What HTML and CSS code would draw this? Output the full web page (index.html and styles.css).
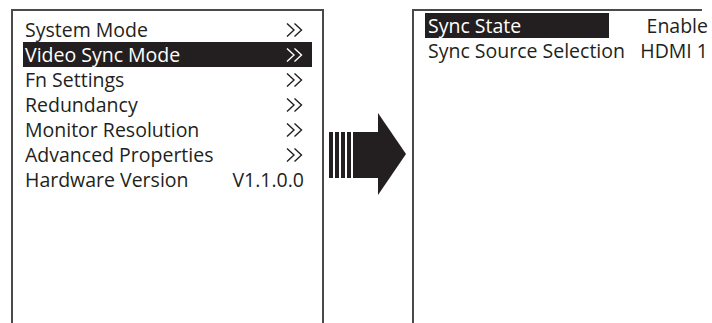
FILE: index.html
```html
<!DOCTYPE html>
<html lang="en">

<head>
  <meta charset="UTF-8">
  <title>Video Sync Mode</title>
  <link rel="stylesheet" href="styles.css">
</head>

<body>

  <div class="screen menu">
    <div class="row"><span>System Mode</span><svg class="chev" viewBox="0 0 17 14"><path d="M1 0.5 L8 7 L1 13.5 M8.5 0.5 L15.5 7 L8.5 13.5"/></svg></div>
    <div class="row active"><span>Video Sync Mode</span><svg class="chev" viewBox="0 0 17 14"><path d="M1 0.5 L8 7 L1 13.5 M8.5 0.5 L15.5 7 L8.5 13.5"/></svg></div>
    <div class="row"><span>Fn Settings</span><svg class="chev" viewBox="0 0 17 14"><path d="M1 0.5 L8 7 L1 13.5 M8.5 0.5 L15.5 7 L8.5 13.5"/></svg></div>
    <div class="row"><span>Redundancy</span><svg class="chev" viewBox="0 0 17 14"><path d="M1 0.5 L8 7 L1 13.5 M8.5 0.5 L15.5 7 L8.5 13.5"/></svg></div>
    <div class="row"><span>Monitor Resolution</span><svg class="chev" viewBox="0 0 17 14"><path d="M1 0.5 L8 7 L1 13.5 M8.5 0.5 L15.5 7 L8.5 13.5"/></svg></div>
    <div class="row"><span>Advanced Properties</span><svg class="chev" viewBox="0 0 17 14"><path d="M1 0.5 L8 7 L1 13.5 M8.5 0.5 L15.5 7 L8.5 13.5"/></svg></div>
    <div class="row"><span>Hardware Version</span><span>V1.1.0.0</span></div>
  </div>

  <div class="arrow">
    <svg viewBox="0 0 78 83" width="78" height="83">
      <rect x="0" y="19" width="4" height="46"/>
      <rect x="6" y="19" width="4" height="46"/>
      <rect x="12" y="19" width="4" height="46"/>
      <rect x="18" y="19" width="4" height="46"/>
      <rect x="24" y="19" width="26" height="46"/>
      <polygon points="49,0 77,41 49,82"/>
    </svg>
  </div>

  <div class="screen sub">
    <div class="sub-grid">
      <span class="label active">Sync State</span><span class="value">Enable</span>
      <span class="label">Sync Source Selection</span><span class="value">HDMI 1</span>
    </div>
  </div>

</body>

</html>
```

FILE: styles.css
```css
* {
  box-sizing: border-box;
}

body {
  margin: 0;
  padding: 9px 0 0 11px;
  background: #fff;
  color: #231f20;
  font-family: "Open Sans", "Noto Sans", sans-serif;
  font-size: 19.5px;
  display: flex;
  align-items: flex-start;
  overflow: hidden;
  height: 323px;
}

.screen {
  border: 2px solid #4a4a4a;
  border-bottom: none;
  height: 314px;
  flex-shrink: 0;
}

.menu {
  width: 313px;
  padding-top: 6px;
}

.row {
  margin: 0 10px;
  padding: 0 8px 0 2px;
  height: 25px;
  line-height: 25px;
  display: flex;
  justify-content: space-between;
  align-items: center;
}

.active {
  background: #231f20;
  color: #fff;
}

.chev {
  width: 17px;
  height: 14px;
  margin-right: 1px;
  fill: none;
  stroke: currentColor;
  stroke-width: 1.4;
}

.arrow {
  width: 88px;
  flex-shrink: 0;
  padding: 104px 0 0 5px;
}

.arrow svg {
  display: block;
  fill: #231f20;
}

.sub {
  width: 290px;
  border-right: none;
  padding: 2px 0 0 11px;
}

.sub-grid {
  display: grid;
  grid-template-columns: 184px 99px;
  grid-auto-rows: 25px;
  line-height: 25px;
}

.label {
  padding-left: 3px;
  white-space: nowrap;
}

.value {
  text-align: right;
}
```
